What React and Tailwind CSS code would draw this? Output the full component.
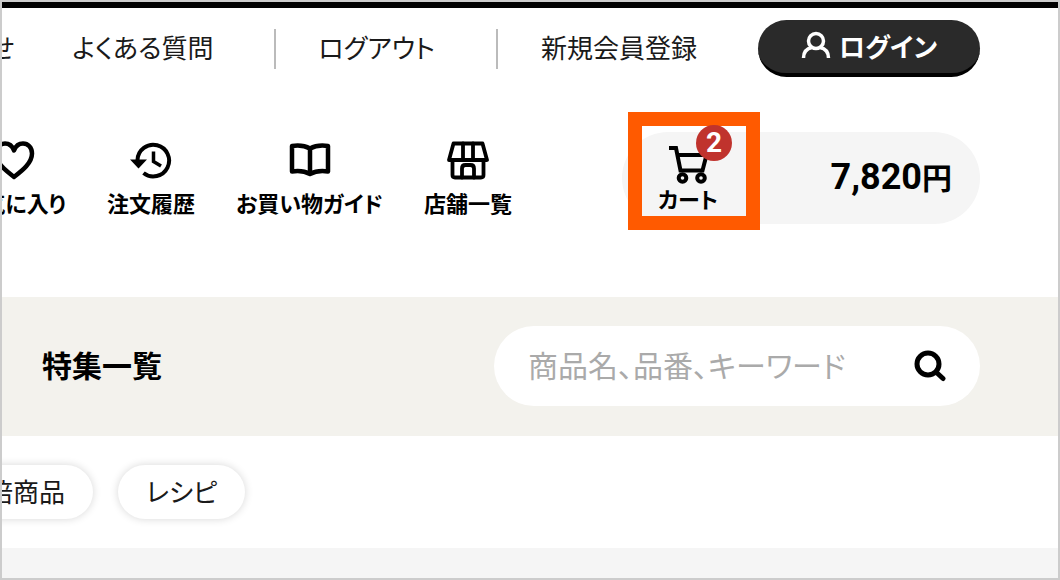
const HeartIcon = () => (
  <svg viewBox="0 0 42 40" className="h-10 w-[42px]" fill="none" stroke="currentColor" strokeWidth="4.5" aria-hidden="true">
    <path d="M21 37C14 31.500 3 23.500 3 13.500C3 7.500 7 3.500 12 3.500C16 3.500 19.500 6.500 21 10.500C22.500 6.500 26 3.500 30 3.500C35 3.500 39 7.500 39 13.500C39 23.500 28 31.500 21 37Z" strokeLinejoin="round" />
  </svg>
);

const HistoryIcon = () => (
  <svg viewBox="0 0 42 40" className="h-10 w-[42px]" fill="none" stroke="currentColor" strokeWidth="4" aria-hidden="true">
    <path d="M7.500 20A15.800 15.800 0 1 1 13.500 33" />
    <path d="M0 19.500H17L8.500 28.500Z" fill="currentColor" stroke="none" />
    <path d="M23.500 11.500V21.500L31 26" strokeWidth="3.500" />
  </svg>
);

const BookIcon = () => (
  <svg viewBox="0 0 42 40" className="h-10 w-[42px]" fill="none" stroke="currentColor" strokeWidth="4.500" strokeLinejoin="round" strokeLinecap="round" aria-hidden="true">
    <path d="M21 8.500C15.500 5.500 9.500 5 3 6V31.500C9.500 30.500 15.500 31 21 34C26.500 31 32.500 30.500 39 31.500V6C32.500 5 26.500 5.500 21 8.500Z" />
    <path d="M21 8.500V33" />
  </svg>
);

const ShopIcon = () => (
  <svg viewBox="0 0 42 40" className="h-10 w-[42px]" fill="none" stroke="currentColor" strokeWidth="3.800" strokeLinejoin="round" strokeLinecap="round" aria-hidden="true">
    <path d="M6.500 3.500H35.500L40 20H2Z" />
    <path d="M16 3.500V20M26 3.500V20" />
    <path d="M5.500 20V35Q5.500 37.500 8 37.500H34Q36.500 37.500 36.500 35V20" />
    <path d="M15 37.500V28.500Q15 25 18.500 25H23.500Q27 25 27 28.500V37.500" />
  </svg>
);

const CartIcon = () => (
  <svg viewBox="0 0 40 40" className="size-10" fill="none" stroke="currentColor" strokeWidth="4" aria-hidden="true">
    <path d="M1 3H8L12.500 25.500H34.500L38.500 10H9" />
    <circle cx="14.500" cy="33" r="3.800" />
    <circle cx="33" cy="33" r="3.800" />
  </svg>
);

const UserIcon = () => (
  <svg viewBox="0 0 30 28" className="h-7 w-[30px]" fill="none" stroke="currentColor" strokeWidth="3.500" aria-hidden="true">
    <circle cx="15" cy="10" r="7.500" />
    <path d="M2.500 27C2.500 20.500 6 17.500 11 16.500M27.500 27C27.500 20.500 24 17.500 19 16.500" />
  </svg>
);

const SearchIcon = () => (
  <svg viewBox="0 0 32 32" className="size-8" fill="none" stroke="currentColor" strokeWidth="5" strokeLinecap="round" aria-hidden="true">
    <circle cx="14" cy="14" r="11" />
    <path d="M22 22L29 28.500" />
  </svg>
);

const menu = [
  { label: 'お気に入り', Icon: HeartIcon },
  { label: '注文履歴', Icon: HistoryIcon },
  { label: 'お買い物ガイド', Icon: BookIcon },
  { label: '店舗一覧', Icon: ShopIcon },
];

const TopLinks = () => (
  <div className="flex items-start justify-end pt-3 pr-[78px]">
    <ul className="flex shrink-0 pt-[9px] text-[26px] leading-9 whitespace-nowrap text-[#1a1a1a]">
      <li className="pr-[58px] pb-1">
        <a href="#contact">お問い合わせ</a>
      </li>
      <li className="pr-[61px] pb-1">
        <a href="#faq">よくある質問</a>
      </li>
      <li className="border-l-2 border-[#bbb] pr-[61px] pb-1 pl-[42px]">
        <a href="#logout">ログアウト</a>
      </li>
      <li className="border-l-2 border-[#bbb] pr-[61px] pb-1 pl-[43px]">
        <a href="#register">新規会員登録</a>
      </li>
    </ul>
    <button
      type="button"
      className="flex h-[57px] w-[222px] shrink-0 items-center justify-center gap-2 rounded-full border-b-4 border-black bg-[#2a2a2a] pb-[3px] text-[26px] font-bold text-white"
    >
      <UserIcon />
      ログイン
    </button>
  </div>
);

const Cart = () => (
  <div className="relative flex h-[92px] w-[358px] shrink-0 items-center justify-between rounded-full bg-[#f5f5f5] pr-7 pl-9">
    <div className="absolute -top-5 left-[6px] h-[118px] w-[132px] border-14 border-[#ff5a00]" />
    <a href="#cart" className="relative flex flex-col items-center gap-px pb-[2px] text-[22px] leading-6 font-bold">
      <CartIcon />
      カート
      <span className="absolute -top-5 left-[38px] flex size-9 items-center justify-center rounded-full bg-[#c0332d] font-[Roboto] text-[28px] text-white">
        2
      </span>
    </a>
    <p className="pb-[2px] text-[30px] font-bold">
      <span className="font-[Roboto] text-[36px]">7,820</span>円
    </p>
  </div>
);

export default function App() {
  return (
    <div className="flex min-h-screen flex-col overflow-hidden border-2 border-[#ccc] bg-white font-['Noto_Sans_CJK_JP',sans-serif] text-black [font-feature-settings:'palt']">
      <header className="border-t-6 border-black">
        <TopLinks />
        <div className="flex items-center justify-end pt-[55px] pr-[78px] pb-[73px]">
          <nav className="mr-[110px] flex shrink-0 gap-[41px]">
            {menu.map(({ label, Icon }) => (
              <a
                key={label}
                href="#menu"
                className="flex flex-col items-center gap-[10px] pb-[2px] text-[22px] leading-6 font-bold whitespace-nowrap"
              >
                <Icon />
                {label}
              </a>
            ))}
          </nav>
          <Cart />
        </div>
      </header>

      <div className="flex items-center justify-between bg-[#f3f2ed] pt-[29px] pr-[78px] pb-[30px] pl-10">
        <a href="#features" className="pb-[3px] text-[30px] font-bold">
          特集一覧
        </a>
        <form className="flex h-20 w-[486px] items-center rounded-full bg-white px-[34px]">
          <input
            type="search"
            aria-label="商品検索"
            placeholder="商品名、品番、キーワード"
            className="min-w-0 flex-1 pb-[3px] text-[30px] outline-none placeholder:text-[#aaa]"
          />
          <button type="submit" aria-label="検索">
            <SearchIcon />
          </button>
        </form>
      </div>

      <ul className="flex gap-[25px] py-[29px] text-[26px] leading-[51px] whitespace-nowrap text-[#1a1a1a]">
        <li className="-ml-[134px]">
          <a href="#points" className="block rounded-full px-7 pb-[3px] shadow-[0_0_8px_rgba(0,0,0,0.16)]">
            ポイント倍商品
          </a>
        </li>
        <li>
          <a href="#recipe" className="block rounded-full px-7 pb-[3px] shadow-[0_0_8px_rgba(0,0,0,0.16)]">
            レシピ
          </a>
        </li>
      </ul>

      <div className="min-h-[30px] flex-1 bg-[#f5f5f5]" />
    </div>
  );
}
